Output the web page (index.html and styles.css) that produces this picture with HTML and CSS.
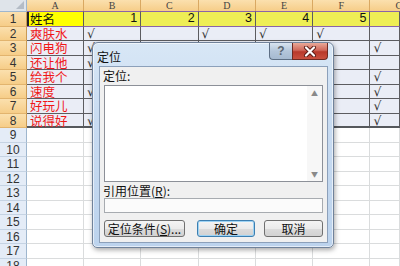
FILE: index.html
```html
<!DOCTYPE html>
<html lang="zh-CN">
<head>
  <meta charset="UTF-8">
  <title>定位</title>
  <link rel="stylesheet" href="styles.css">
</head>
<body>
  <div id="sheet" class="sheet"></div>

  <div class="dialog">
    <div class="titlebar">
      <span class="title">定位</span>
      <div class="caption-btns">
        <span class="help">?</span>
        <span class="close">
          <svg width="14" height="11" viewBox="0 0 14 11"><path d="M3 1.5 L11 9.5 M11 1.5 L3 9.5" stroke="#5a1a14" stroke-width="4" stroke-linecap="round"/><path d="M3 1.5 L11 9.5 M11 1.5 L3 9.5" stroke="#fff" stroke-width="2.2" stroke-linecap="round"/></svg>
        </span>
      </div>
    </div>
    <div class="client">
      <div class="lbl">定位:</div>
      <div class="listbox">
        <div class="scroll"><span>▲</span><span>▼</span></div>
      </div>
      <div class="lbl lbl2">引用位置(<u>R</u>):</div>
      <div class="refinput"></div>
      <div class="buttons">
        <button class="btn wide">定位条件(<u>S</u>)...</button>
        <button class="btn ok">确定</button>
        <button class="btn cancel">取消</button>
      </div>
    </div>
  </div>

  <script>
    const cols = ['A', 'B', 'C', 'D', 'E', 'F', 'G'];
    const names = ['姓名', '爽肤水', '闪电狗', '还让他', '给我个', '速度', '好玩儿', '说得好'];
    const checks = {
      2: ['B', 'D', 'E', 'F'],
      3: ['B', 'D', 'E', 'F', 'G'],
      4: ['B'],
      5: ['G'],
      6: ['B', 'G'],
      7: ['G'],
      8: ['B', 'G']
    };

    const sheet = document.getElementById('sheet');

    function cell(cls, text) {
      const d = document.createElement('div');
      d.className = cls;
      if (text) d.textContent = text;
      sheet.appendChild(d);
    }

    // header row
    cell('corner');
    cols.forEach(c => cell(c === 'G' ? 'colhead last' : 'colhead', c));

    for (let r = 1; r <= 18; r++) {
      const inSel = r <= 8;
      cell(inSel ? 'rowhead sel' : 'rowhead', String(r));
      cols.forEach((c, i) => {
        if (!inSel) { cell('c'); return; }
        let cls = 'c t';
        if (r === 1) cls += ' r1';
        if (r === 8) cls += ' r8';
        if (r === 1 && c === 'A') { cell('c t r1 active', names[0]); return; }
        if (c === 'A') { cell(cls + ' name', names[r - 1]); return; }
        if (r === 1) { cell(cls + ' num', c === 'G' ? '' : String(i)); return; }
        const has = (checks[r] || []).includes(c);
        cell(cls + ' chk', has ? '√' : '');
      });
    }
  </script>
</body>
</html>
```

FILE: styles.css
```css
body {
  margin: 0;
  width: 400px;
  height: 266px;
  overflow: hidden;
  background: #fff;
  position: relative;
  font-family: "Noto Sans CJK SC", sans-serif;
}

/* worksheet */
.sheet {
  display: grid;
  grid-template-columns: 27px 57px repeat(5, 57.3px) 29.5px;
  grid-template-rows: 12px;
  grid-auto-rows: 14.5px;
}
.sheet > div {
  box-sizing: border-box;
  overflow: hidden;
  white-space: nowrap;
}
.corner {
  background: #dfe4ea;
  border-right: 1px solid #9eb6ce;
  border-bottom: 1px solid #9eb6ce;
  position: relative;
}
.corner::after {
  content: "";
  position: absolute;
  right: 2px;
  bottom: 2px;
  border-left: 8px solid transparent;
  border-bottom: 8px solid #b4bcc6;
}
.colhead {
  background: linear-gradient(#fbe0ae, #f6cd88);
  border-right: 1px solid #d9a862;
  border-bottom: 1px solid #b48a4e;
  font-family: "Liberation Serif", serif;
  font-size: 10px;
  line-height: 11px;
  color: #444;
  text-align: center;
}
.colhead.last {
  text-align: left;
  padding-left: 25px;
  border-right: none;
}
.rowhead {
  background: #e4ecf7;
  border-right: 1px solid #9eb6ce;
  border-bottom: 1px solid #c5d3e3;
  font-family: "Liberation Sans", sans-serif;
  font-size: 12px;
  line-height: 14px;
  color: #333;
  text-align: center;
}
.rowhead.sel {
  background: linear-gradient(#fbe0ae, #f6cd88);
  border-right: 1px solid #c89a55;
  border-bottom: 1px solid #e2b46e;
}
.c {
  border-right: 1px solid #dadcdd;
  border-bottom: 1px solid #dadcdd;
}
.c.t {
  background: #eaedf6;
  border-right: 1px solid #5c5c60;
  border-bottom: 1px solid #5c5c60;
  font-size: 12.5px;
  line-height: 13px;
}
.c.r1 {
  background: #eeee55;
  border-top: 1px solid #8a64a8;
  border-bottom: 1px solid #8a64a8;
  margin-top: -1px;
  height: 15.5px;
}
.c.active {
  background: #ffff00;
  box-shadow: inset 2px 0 0 #222;
  padding-left: 3px;
  color: #111;
}
.c.r8 {
  border-bottom: 2px solid #55585c;
}
.sheet > .name, .sheet > .active {
  overflow: visible;
}
.name {
  color: #f01818;
  padding-left: 3px;
}
.num {
  font-family: "Liberation Sans", sans-serif;
  font-size: 12px;
  text-align: right;
  padding-right: 3px;
  color: #111;
}
.chk {
  font-family: "DejaVu Sans", sans-serif;
  font-size: 11px;
  font-style: italic;
  color: #333;
  padding-left: 3px;
}

/* dialog window */
.dialog {
  position: absolute;
  left: 92px;
  top: 42px;
  width: 242px;
  height: 206px;
  box-sizing: border-box;
  border: 1px solid #70829a;
  border-radius: 6px 6px 5px 5px;
  background: linear-gradient(#d8e7f6, #c8dbf1 40%, #bcd3ed);
  box-shadow: 1px 2px 5px rgba(0, 0, 0, 0.35), inset 0 0 0 1px rgba(255, 255, 255, 0.6);
  padding: 0 5px 4px 6px;
  display: flex;
  flex-direction: column;
}
.titlebar {
  height: 24px;
  display: flex;
  align-items: flex-start;
  margin-left: -2px;
}
.title {
  font-size: 12px;
  line-height: 14px;
  padding-top: 7px;
  color: #111;
}
.caption-btns {
  margin-left: auto;
  display: flex;
  height: 17px;
}
.help, .close {
  box-sizing: border-box;
  height: 17px;
  border: 1px solid #5e6f84;
  border-top: none;
  display: flex;
  align-items: center;
  justify-content: center;
}
.help {
  width: 23px;
  border-radius: 0 0 0 4px;
  border-right: none;
  background: linear-gradient(#d9e4f0, #b4c6da 50%, #a6bad0);
  font-family: "Liberation Sans", sans-serif;
  font-weight: bold;
  font-size: 12px;
  color: #5c6670;
}
.close {
  width: 36px;
  border-radius: 0 0 4px 0;
  border-color: #6d2a22;
  background: linear-gradient(#e9a998, #d0685a 45%, #b8392b 55%, #c9503f);
}
.client {
  flex: 1;
  background: #f0f0f0;
  border: 1px solid #8ca0ba;
  padding: 2px 4px 5px 4px;
  display: flex;
  flex-direction: column;
  font-size: 12px;
  color: #111;
}
.lbl {
  line-height: 14px;
  height: 14px;
  margin-left: -1px;
}
.listbox {
  margin-top: 2px;
  height: 97px;
  box-sizing: border-box;
  border: 1px solid #8c9098;
  background: #fff;
  display: flex;
  justify-content: flex-end;
}
.scroll {
  width: 15px;
  background: #f7f7f7;
  display: flex;
  flex-direction: column;
  justify-content: space-between;
  align-items: center;
  font-size: 7px;
  line-height: 14px;
  color: #8a8a8a;
}
.lbl2 {
  margin-top: 2px;
}
.refinput {
  height: 15px;
  box-sizing: border-box;
  border: 1px solid #a7abb0;
  background: #fbfbfb;
}
.buttons {
  display: flex;
  margin-top: 7px;
}
.btn {
  height: 17px;
  box-sizing: border-box;
  padding: 0;
  border: 1px solid #707070;
  border-radius: 3px;
  background: linear-gradient(#f4f4f4, #ebebeb 50%, #dcdcdc 51%, #d2d2d2);
  font-family: "Noto Sans CJK SC", sans-serif;
  font-size: 12px;
  line-height: 14px;
  color: #111;
}
.btn.wide {
  width: 81px;
}
.btn.ok {
  width: 58px;
  margin-left: 12px;
  border-color: #3c7fb1;
  box-shadow: inset 0 0 0 1px #9ed3f4;
}
.btn.cancel {
  width: 59px;
  margin-left: 9px;
}
```
